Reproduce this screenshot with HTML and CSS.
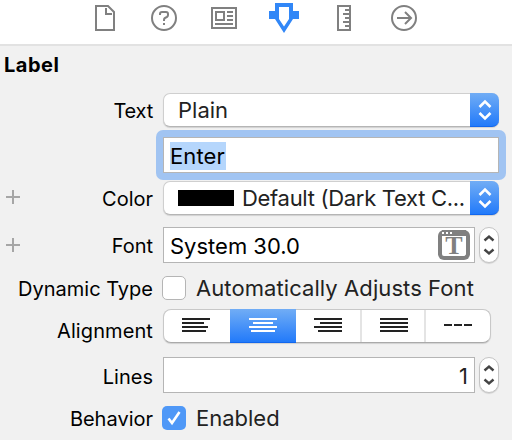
FILE: index.html
```html
<!DOCTYPE html>
<html lang="en">
<head>
<meta charset="utf-8">
<title>Label inspector</title>
<link rel="stylesheet" href="styles.css">
</head>
<body>
<main class="inspector">
  <nav class="tabs">
    <svg width="20" height="26" viewBox="0 0 20 26" fill="none" stroke="#808080" stroke-width="2"><path d="M1 1H13L19 7V25H1Z"/><path d="M11 3V9H17" /></svg>
    <svg class="tab-help" width="26" height="26" viewBox="0 0 26 26" fill="none" stroke="#808080" stroke-width="2"><circle cx="13" cy="13" r="12"/><path d="M9 10V9Q9 7 11 7H15Q17 7 17 9V10Q17 11 16 12L14 13Q13 13.5 13 15V16M13 18V20"/></svg>
    <svg class="tab-identity" width="26" height="22" viewBox="0 0 26 22" fill="none" stroke="#808080" stroke-width="2"><path d="M1 1H25V21H1ZM5 5H13V13H5ZM16 5H22M16 9H22M16 13H22M4 17H22"/></svg>
    <svg class="tab-attributes" width="30" height="30" viewBox="0 0 30 30"><path fill="#3187f7" fill-rule="evenodd" d="M6 0H24V8H30V16H24L15 30L6 16H0V8H6ZM10 4V16L15 23.500L20 16V4Z"/></svg>
    <svg class="tab-size" width="14" height="26" viewBox="0 0 14 26" fill="none" stroke="#808080" stroke-width="2"><path d="M1 1H13V25H1ZM8 5H12M6 9H12M8 13H12M6 17H12M8 21H12"/></svg>
    <svg class="tab-connections" width="26" height="26" viewBox="0 0 26 26" fill="none" stroke="#808080" stroke-width="2"><circle cx="13" cy="13" r="12"/><path d="M6 13H20M14 7L20 13L14 19"/></svg>
  </nav>
  <h1 class="title">Label</h1>

  <div class="row row-text">
    <span class="label label-text">Text</span>
    <div class="popup"><span class="value plain">Plain</span><span class="arrows"><svg width="14" height="22" viewBox="0 0 14 22"><path d="M1.500 8L7 2.500L12.500 8M1.500 14L7 19.500L12.500 14"/></svg></span></div>
  </div>
  <div class="row row-entry">
    <span class="label"></span>
    <div class="field focused"><span class="value selection">Enter</span></div>
  </div>
  <div class="row row-color">
    <span class="plus"></span>
    <span class="label label-color">Color</span>
    <div class="popup"><span class="swatch"></span><span class="value color-name">Default (Dark Text C...</span><span class="arrows"><svg width="14" height="22" viewBox="0 0 14 22"><path d="M1.500 8L7 2.500L12.500 8M1.500 14L7 19.500L12.500 14"/></svg></span></div>
  </div>
  <div class="row row-font">
    <span class="plus"></span>
    <span class="label label-font">Font</span>
    <div class="field"><span class="value font-name">System 30.0</span>
      <span class="font-picker"><span class="dots"><i></i><i></i><i></i></span><b>T</b></span></div>
    <div class="stepper"><svg width="12" height="22" viewBox="0 0 12 22"><path d="M1.500 6.500L6 2.500L10.500 6.500M1.500 15.500L6 19.500L10.500 15.500"/></svg></div>
  </div>
  <div class="row row-dynamic">
    <span class="label label-dynamic">Dynamic Type</span>
    <span class="check"></span><span class="value caption-auto">Automatically Adjusts Font</span>
  </div>
  <div class="row row-align">
    <span class="label label-align">Alignment</span>
    <div class="segments">
      <span class="segment first"><svg width="28" height="14" viewBox="0 0 28 14"><path d="M0 1H28M0 5H22M0 9H26M0 13H24"/></svg></span>
      <span class="segment chosen"><svg width="28" height="14" viewBox="0 0 28 14"><path d="M0 1H28M4 5H24M0 9H28M2 13H26"/></svg></span>
      <span class="segment"><svg width="28" height="14" viewBox="0 0 28 14"><path d="M0 1H28M6 5H28M0 9H28M4 13H28"/></svg></span>
      <span class="segment justified"><svg width="28" height="14" viewBox="0 0 28 14"><path d="M0 1H28M0 5H28M0 9H28M0 13H28"/></svg></span>
      <span class="segment last"><svg width="28" height="14" viewBox="0 0 28 14"><path d="M0 7H8M10 7H18M20 7H28"/></svg></span>
    </div>
  </div>
  <div class="row row-lines">
    <span class="label label-lines">Lines</span>
    <div class="field number"><span class="value">1</span></div>
    <div class="stepper"><svg width="12" height="22" viewBox="0 0 12 22"><path d="M1.500 6.500L6 2.500L10.500 6.500M1.500 15.500L6 19.500L10.500 15.500"/></svg></div>
  </div>
  <div class="row row-behavior">
    <span class="label label-behavior">Behavior</span>
    <span class="check on"><svg width="16" height="16" viewBox="0 0 16 16"><path d="M2.500 8.500L6 13L13.500 2"/></svg></span><span class="value caption-enabled">Enabled</span>
  </div>
</main>
</body>
</html>
```

FILE: styles.css
```css
* { box-sizing: border-box; }
body { margin: 0; background: #f1f1f1; color: #000; font-family: Inter, "Liberation Sans", sans-serif; }
.inspector { width: 512px; height: 440px; overflow: hidden; }
svg { display: block; flex: none; }

.tabs { display: flex; align-items: flex-start; height: 46px; padding: 5px 0 0 95px; background: #fff; border-bottom: 2px solid #e2e2e2; }
.tabs .tab-attributes { margin: -2px 0 0 32px; }
.tab-help { margin-left: 36px; }
.tab-identity { margin: 2px 0 0 34px; }
.tab-size { margin-left: 38px; }
.tab-connections { margin-left: 40px; }

.title { margin: 0; height: 47px; padding: 6px 0 0 4px; font-size: 20px; line-height: 26px; font-weight: 700; letter-spacing: 0.5px; }

.row { display: flex; align-items: center; position: relative; }
.label { width: 153px; margin-right: 10px; flex: none; text-align: right; font-size: 20px; line-height: 24px; padding-top: 2px; white-space: nowrap; }
.label-text { letter-spacing: -0.2px; }
.label-align { padding-top: 9px; letter-spacing: 0.1px; }
.label-lines { padding-top: 4px; }
.value { font-size: 22px; line-height: 28px; white-space: nowrap; color: #222; }

.row-text { height: 34px; }
.row-entry { height: 36px; margin-top: 10px; }
.row-color { height: 34px; margin-top: 8px; }
.row-font { height: 36px; margin-top: 12px; }
.row-dynamic { height: 24px; margin-top: 13px; }
.row-align { height: 34px; margin-top: 9px; }
.row-lines { height: 36px; margin-top: 14px; }
.row-behavior { height: 24px; margin-top: 13px; }

.popup { display: flex; align-items: center; width: 336px; height: 34px; padding-left: 14px; border: 1px solid #cfcfcf; border-right: 0; border-bottom-color: #b5b5b5; border-radius: 7px; background: #fff; box-shadow: 0 1px 1px #0002; }
.arrows { display: flex; align-items: center; justify-content: center; width: 29px; height: 34px; margin: -1px 0 -1px auto; flex: none; border-radius: 0 7px 7px 0; background: linear-gradient(#71adf5, #227afa); border-bottom: 1px solid #1267ee; }
.arrows path { fill: none; stroke: #fff; stroke-width: 2.6; }
.swatch { width: 56px; height: 16px; margin-right: 8px; background: #000; flex: none; }
.color-name { letter-spacing: -0.3px; }

.field { display: flex; align-items: center; width: 312px; height: 36px; padding: 0 5px 0 6px; border: 1px solid #b5b5b5; background: #fff; }
.focused { width: 336px; box-shadow: 0 0 0 7px #a1c4f2; clip-path: inset(-7px round 7px); }
.selection { padding-right: 1px; background: #b5d6fc; color: #000; line-height: 28px; letter-spacing: 0.1px; }
.focused .selection { margin-top: 1px; }
.font-name { color: #000; padding-top: 1px; }
.number { justify-content: flex-end; padding-right: 6px; }
.number .value { padding-top: 1px; }
.font-picker { display: flex; flex-direction: column; align-items: center; width: 32px; height: 30px; margin: 0 -1px 0 auto; border: 4px solid #808080; border-top: 0; border-radius: 6px; background: #fff; color: #808080; }
.dots { display: flex; gap: 2px; width: 24px; height: 6px; padding-top: 2px; background: #808080; flex: none; }
.dots i { width: 2px; height: 2px; background: #fff; }
.font-picker b { font: 700 26px/20px "Liberation Serif", serif; }
.stepper { display: flex; align-items: center; justify-content: center; width: 20px; height: 36px; margin-left: 4px; border: 1px solid #c4c4c4; border-radius: 10px; background: #fff; box-shadow: 0 1px 1px #0002; }
.stepper path { fill: none; stroke: #444; stroke-width: 2.4; }

.plus { position: absolute; left: 6px; top: 9px; width: 14px; height: 14px; background: linear-gradient(#a6a6a6, #a6a6a6) 0 6px / 14px 2px no-repeat, linear-gradient(#a6a6a6, #a6a6a6) 6px 0 / 2px 14px no-repeat; }
.row-font .plus { top: 11px; }

.check { display: flex; align-items: center; justify-content: center; width: 24px; height: 24px; margin: 0 10px 0 -1px; flex: none; border: 1px solid #b5b5b5; border-radius: 5px; background: #fff; }
.check.on { border: 0; background: #4f98f7; }
.check path { fill: none; stroke: #fff; stroke-width: 2.6; }
.caption-auto { letter-spacing: 0.08px; }

.segments { display: flex; width: 328px; height: 34px; border: 1px solid #c8c8c8; border-bottom-color: #aaa; border-radius: 8px; background: #fff; box-shadow: 0 1px 1px #0002; }
.segment { display: flex; justify-content: center; flex: none; width: 64px; padding-top: 8px; border-left: 2px solid #e4e4e4; }
.segment.first { width: 66px; padding-right: 2px; border: 0; }
.segment.justified { padding-left: 2px; }
.segment.last { width: 66px; }
.segment.chosen { width: 66px; height: 34px; margin: -1px 0; padding-top: 9px; border: 0; border-bottom: 1px solid #1267ee; background: linear-gradient(#71adf5, #227afa); }
.segment.chosen + .segment { border-left: 0; }
.segment path { fill: none; stroke: #222; stroke-width: 2; }
.segment.chosen path { stroke: #fff; }
```
